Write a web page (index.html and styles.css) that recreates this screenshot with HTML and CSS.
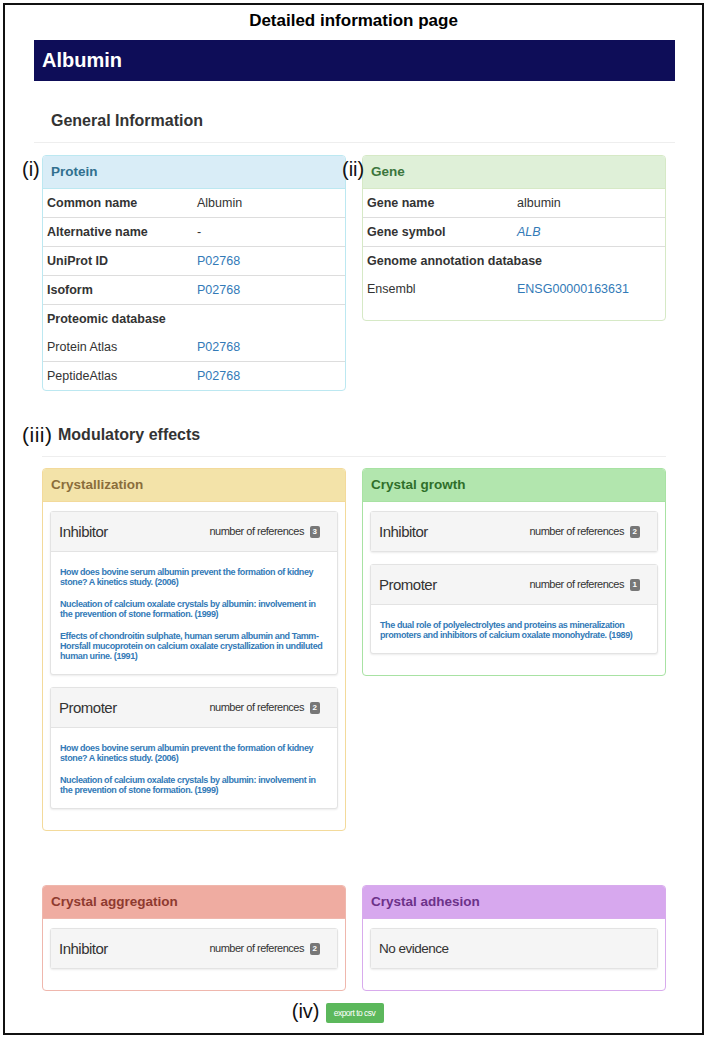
FILE: index.html
```html
<!DOCTYPE html>
<html lang="en">
<head>
    <meta charset="UTF-8">
    <title>Detailed information page</title>
    <link rel="stylesheet" href="styles.css">
</head>
<body>
    <div class="frame">
        <h1 class="page-title">Detailed information page</h1>
        <div class="content">
            <div class="name-bar">Albumin</div>

            <h2 class="section-title">General Information</h2>
            <div class="info-grid">
                <div class="panel panel-protein">
                    <span class="tag tag-panel">(i)</span>
                    <div class="panel-heading">Protein</div>
                    <table class="info-table">
                        <tr><td class="label">Common name</td><td>Albumin</td></tr>
                        <tr><td class="label">Alternative name</td><td>-</td></tr>
                        <tr><td class="label">UniProt ID</td><td><a href="#">P02768</a></td></tr>
                        <tr><td class="label">Isoform</td><td><a href="#">P02768</a></td></tr>
                        <tr><td class="label" colspan="2">Proteomic database</td></tr>
                        <tr class="no-line"><td>Protein Atlas</td><td><a href="#">P02768</a></td></tr>
                        <tr><td>PeptideAtlas</td><td><a href="#">P02768</a></td></tr>
                    </table>
                </div>
                <div class="panel panel-gene">
                    <span class="tag tag-panel">(ii)</span>
                    <div class="panel-heading">Gene</div>
                    <table class="info-table">
                        <tr><td class="label">Gene name</td><td>albumin</td></tr>
                        <tr><td class="label">Gene symbol</td><td><a href="#"><i>ALB</i></a></td></tr>
                        <tr><td class="label" colspan="2">Genome annotation database</td></tr>
                        <tr class="no-line"><td>Ensembl</td><td><a href="#">ENSG00000163631</a></td></tr>
                    </table>
                </div>
            </div>

            <div class="modulatory">
                <h2 class="section-title"><span class="tag tag-heading">(iii)</span>Modulatory effects</h2>
                <div class="effect-grid">
                    <div class="panel effect-crystallization">
                        <div class="panel-heading">Crystallization</div>
                        <div class="panel-body">
                            <div class="sub">
                                <div class="sub-head">
                                    <span class="sub-title">Inhibitor</span>
                                    <span class="ref-count">number of references <span class="badge">3</span></span>
                                </div>
                                <div class="sub-body">
                                    <a class="ref" href="#">How does bovine serum albumin prevent the formation of kidney stone? A kinetics study. (2006)</a>
                                    <a class="ref" href="#">Nucleation of calcium oxalate crystals by albumin: involvement in the prevention of stone formation. (1999)</a>
                                    <a class="ref" href="#">Effects of chondroitin sulphate, human serum albumin and Tamm-Horsfall mucoprotein on calcium oxalate crystallization in undiluted human urine. (1991)</a>
                                </div>
                            </div>
                            <div class="sub">
                                <div class="sub-head">
                                    <span class="sub-title">Promoter</span>
                                    <span class="ref-count">number of references <span class="badge">2</span></span>
                                </div>
                                <div class="sub-body">
                                    <a class="ref" href="#">How does bovine serum albumin prevent the formation of kidney stone? A kinetics study. (2006)</a>
                                    <a class="ref" href="#">Nucleation of calcium oxalate crystals by albumin: involvement in the prevention of stone formation. (1999)</a>
                                </div>
                            </div>
                        </div>
                    </div>

                    <div class="panel effect-growth">
                        <div class="panel-heading">Crystal growth</div>
                        <div class="panel-body">
                            <div class="sub">
                                <div class="sub-head">
                                    <span class="sub-title">Inhibitor</span>
                                    <span class="ref-count">number of references <span class="badge">2</span></span>
                                </div>
                            </div>
                            <div class="sub">
                                <div class="sub-head">
                                    <span class="sub-title">Promoter</span>
                                    <span class="ref-count">number of references <span class="badge">1</span></span>
                                </div>
                                <div class="sub-body">
                                    <a class="ref" href="#">The dual role of polyelectrolytes and proteins as mineralization promoters and inhibitors of calcium oxalate monohydrate. (1989)</a>
                                </div>
                            </div>
                        </div>
                    </div>

                    <div class="panel effect-aggregation">
                        <div class="panel-heading">Crystal aggregation</div>
                        <div class="panel-body">
                            <div class="sub">
                                <div class="sub-head">
                                    <span class="sub-title">Inhibitor</span>
                                    <span class="ref-count">number of references <span class="badge">2</span></span>
                                </div>
                            </div>
                        </div>
                    </div>

                    <div class="panel effect-adhesion">
                        <div class="panel-heading">Crystal adhesion</div>
                        <div class="panel-body">
                            <div class="sub">
                                <div class="sub-head">
                                    <span class="sub-title no-evidence">No evidence</span>
                                </div>
                            </div>
                        </div>
                    </div>
                </div>
            </div>

            <div class="export">
                <span class="export-wrap">
                    <span class="tag tag-export">(iv)</span>
                    <button class="btn-export">export to csv</button>
                </span>
            </div>
        </div>
    </div>
</body>
</html>
```

FILE: styles.css
```css
body {
    margin: 0;
    font-family: "Liberation Sans", Arial, sans-serif;
    color: #333;
    background: #fff;
}

.frame {
    box-sizing: border-box;
    width: 701px;
    height: 1032px;
    margin: 3px;
    border: 2px solid #111;
}

.page-title {
    margin: 0;
    padding: 6px 0 9px;
    font-size: 17px;
    line-height: 20px;
    text-align: center;
    color: #000;
}

.content {
    padding: 0 27px 0 29px;
}

.name-bar {
    height: 41px;
    line-height: 41px;
    padding-left: 8px;
    background: #0e0d58;
    color: #fff;
    font-size: 20px;
    font-weight: bold;
}

.section-title {
    position: relative;
    margin: 29px 0 0;
    padding: 0 0 10px 17px;
    font-size: 16px;
    line-height: 22px;
    border-bottom: 1px solid #eee;
}

a {
    color: #337ab7;
    text-decoration: none;
}

/* annotation labels (i) (ii) ... */
.tag {
    position: absolute;
    font-size: 20px;
    font-weight: normal;
    line-height: 22px;
    letter-spacing: 0;
    color: #111;
}

.tag-panel {
    left: -21px;
    top: 2px;
}

.tag-heading {
    left: -20px;
    top: 0;
    font-size: 21px;
    letter-spacing: 0.5px;
}

/* panels */
.info-grid,
.effect-grid {
    display: grid;
    grid-template-columns: 304px 304px;
    column-gap: 16px;
    align-items: start;
}

.info-grid {
    margin: 12px 9px 0 8px;
}

.panel {
    position: relative;
    background: #fff;
    border: 1px solid #ddd;
    border-radius: 4px;
}

.panel-heading {
    height: 32px;
    line-height: 32px;
    padding-left: 8px;
    font-size: 13.5px;
    font-weight: bold;
    border-bottom: 1px solid #ddd;
    border-radius: 3px 3px 0 0;
}

.panel-protein { border-color: #bce8f1; }
.panel-protein .panel-heading { background: #d9edf7; color: #31708f; border-color: #bce8f1; }

.panel-gene { border-color: #d6e9c6; }
.panel-gene .panel-heading { background: #dff0d8; color: #3c763d; border-color: #d6e9c6; }
.panel-gene .info-table { margin-bottom: 17px; }

.info-table {
    width: 100%;
    border-collapse: collapse;
    font-size: 12.5px;
}

.info-table td {
    padding: 5px 4px;
    line-height: 18px;
    border-top: 1px solid #ddd;
}

.info-table tr:first-child td,
.info-table tr.no-line td {
    border-top: none;
}

.info-table td:first-child {
    width: 142px;
}

.info-table .label {
    font-weight: bold;
}

/* modulatory effects */
.modulatory {
    margin: 33px 9px 0 8px;
}

.modulatory .section-title {
    margin-top: 0;
    padding-left: 16px;
}

.effect-grid {
    margin-top: 11px;
    row-gap: 54px;
}

.panel-body {
    display: flex;
    flex-direction: column;
    gap: 12px;
    padding: 9px 7px 21px;
}

.effect-crystallization { border-color: #f3da9b; }
.effect-crystallization .panel-heading { background: #f3e3a9; color: #8a6d3b; border-color: #f3da9b; }

.effect-growth { border-color: #a8e2a3; }
.effect-growth .panel-heading { background: #b2e6ae; color: #2f6f2a; border-color: #a8e2a3; }

.effect-aggregation { border-color: #efb7ad; }
.effect-aggregation .panel-heading { background: #efaca1; color: #8e3a2f; border-color: #efb7ad; }

.effect-adhesion { border-color: #d8abed; }
.effect-adhesion .panel-heading { background: #d7a8ee; color: #6c3189; border-color: #d8abed; }

/* the inner panels use a tighter, narrow-looking type */
.sub {
    border: 1px solid #e3e3e3;
    border-radius: 3px;
    box-shadow: 0 1px 2px rgba(0, 0, 0, 0.08);
    background: #fff;
}

.sub-head {
    display: flex;
    justify-content: space-between;
    align-items: center;
    height: 39px;
    padding: 0 17px 0 8px;
    background: #f5f5f5;
}

.sub-title {
    font-size: 15px;
    letter-spacing: -0.5px;
}

.no-evidence {
    font-size: 13.5px;
}

.ref-count {
    font-size: 11px;
    letter-spacing: -0.5px;
}

.badge {
    display: inline-block;
    margin-left: 3px;
    padding: 2px 3px;
    background: #777;
    color: #fff;
    font-size: 8px;
    font-weight: bold;
    line-height: 8px;
    letter-spacing: 0;
    border-radius: 2px;
    vertical-align: middle;
}

.sub-body {
    padding: 15px 9px 13px;
    border-top: 1px solid #e3e3e3;
}

.ref {
    display: block;
    font-size: 9px;
    font-weight: bold;
    line-height: 10px;
    letter-spacing: -0.4px;
}

.ref + .ref {
    margin-top: 12px;
}

/* export */
.export {
    margin-top: 11px;
    text-align: center;
}

.export-wrap {
    position: relative;
    display: inline-block;
}

.tag-export {
    right: calc(100% + 6px);
    top: -3px;
}

.btn-export {
    display: block;
    width: 58px;
    height: 20px;
    padding: 0;
    border: none;
    border-radius: 2px;
    background: #5cb85c;
    color: #fff;
    font-family: "Liberation Sans", Arial, sans-serif;
    font-size: 8.5px;
    letter-spacing: -0.5px;
}
```
